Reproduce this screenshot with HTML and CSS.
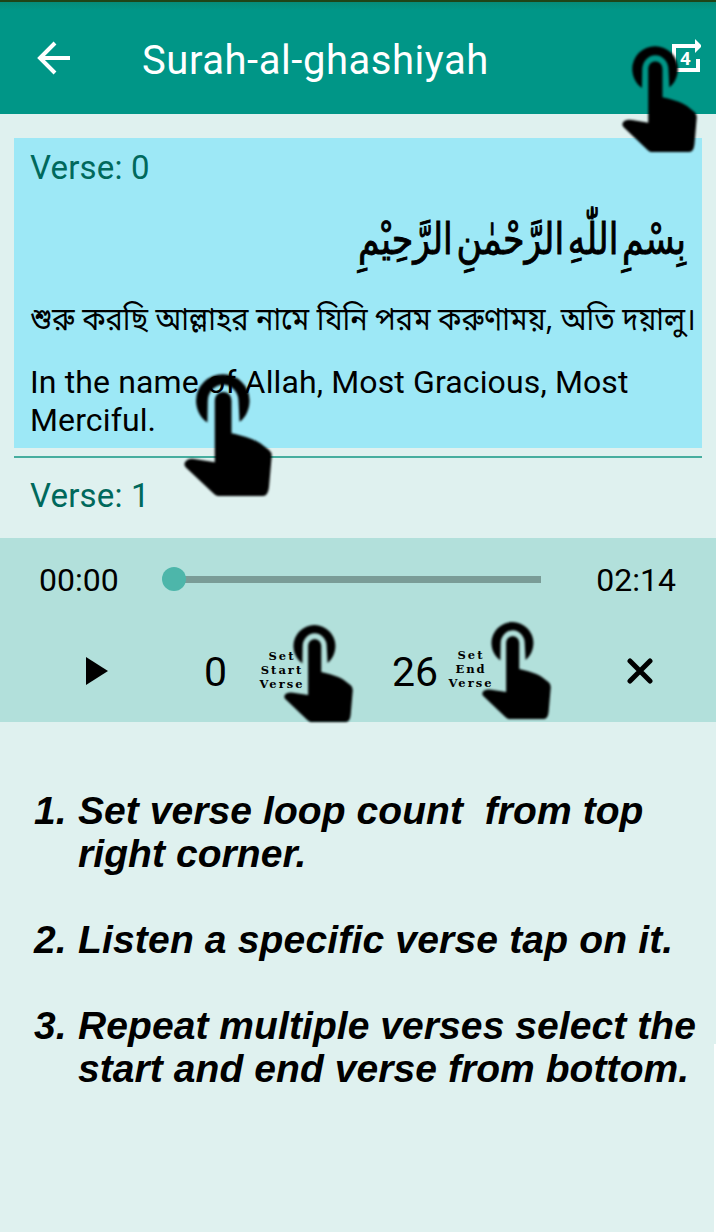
FILE: index.html
```html
<!DOCTYPE html>
<html lang="en">
<head>
<meta charset="utf-8">
<title>Surah-al-ghashiyah</title>
<link rel="stylesheet" href="styles.css">
</head>
<body>
<svg class="defs" width="0" height="0">
  <symbol id="tap" viewBox="0 0 263 368" preserveAspectRatio="none">
    <path d="M70 148C49 135 36 108 36 82A80 78 0 0 1 196 82C196 108 184 134 166 146L163 85A46 50 0 0 0 71 85Z"/>
    <path d="M92 267V84C92 48 142 48 142 84V180C172 187 205 195 228 210L254 230Q263 237 262 250L254 342Q251 368 236 368H101Q94 367 86 358L5 282Q-3 272 6 263Q15 254 35 258Z"/>
  </symbol>
</svg>
<main class="screen">
  <header class="toolbar">
    <svg class="back" viewBox="0 0 34 34"><path d="M33 17H3M18 2L3 17L18 32"/></svg>
    <h1 class="title">Surah-al-ghashiyah</h1>
    <div class="loop">
      <svg viewBox="0 0 32 36" width="32" height="36"><path d="M3 22V9H24M27 22V33H3V22" fill="none" stroke="#fff" stroke-width="4"/><path d="M24 2L30 8V10L24 16Z" fill="#fff"/></svg>
      <span class="count">4</span>
      <svg class="hand hand-loop"><use href="#tap"/></svg>
    </div>
  </header>
  <section class="verses">
    <article class="verse active">
      <h2 class="label">Verse: 0</h2>
      <svg class="arabic" width="688" height="100"><text x="344" y="67" textLength="328" lengthAdjust="spacingAndGlyphs">بِسْمِ اللّٰهِ الرَّحْمٰنِ الرَّحِيْمِ</text></svg>
      <svg class="bengali" width="688" height="60"><text x="16" y="44" textLength="666" lengthAdjust="spacingAndGlyphs">শুরু করছি আল্লাহর নামে যিনি পরম করুণাময়, অতি দয়ালু।</text></svg>
      <p class="english">In the name of Allah, Most Gracious, Most<br>Merciful.</p>
      <svg class="hand hand-verse"><use href="#tap"/></svg>
    </article>
    <article class="verse next"><h2 class="label">Verse: 1</h2></article>
  </section>
  <section class="player">
    <div class="timeline">
      <span class="time">00:00</span>
      <div class="track"><i class="knob"></i></div>
      <span class="time">02:14</span>
    </div>
    <div class="controls">
      <svg class="play" viewBox="0 0 22 28"><path d="M0 0L22 14L0 28Z"/></svg>
      <span class="num start">0</span>
      <div class="set set-start">Set<br>Start<br>Verse<svg class="hand hand-start"><use href="#tap"/></svg></div>
      <span class="num end">26</span>
      <div class="set set-end">Set<br>End<br>Verse<svg class="hand hand-end"><use href="#tap"/></svg></div>
      <svg class="close" viewBox="0 0 26 26"><path d="M3 3L23 23M23 3L3 23"/></svg>
    </div>
  </section>
  <section class="help">
    <ol class="steps">
      <li><b>1.</b><p>Set verse loop count&nbsp; from top<br>right corner.</p></li>
      <li><b>2.</b><p class="spread">Listen a specific verse tap on it.</p></li>
      <li><b>3.</b><p>Repeat multiple verses select the<br>start and end verse from bottom.</p></li>
    </ol>
    <i class="edge"></i>
  </section>
</main>
</body>
</html>
```
FILE: styles.css
```css
* { box-sizing: border-box; margin: 0; padding: 0; }
body { width: 716px; height: 1232px; overflow: hidden; background: #dff1ef; color: #000; font-family: Roboto, sans-serif; }
.defs { display: block; height: 0; }
svg { display: block; flex: none; }
.screen { display: flex; flex-direction: column; height: 1232px; }
.toolbar { flex: none; display: flex; align-items: flex-start; height: 114px; border-top: 2px solid #204417; background: linear-gradient(#068b78, #009687 8px); color: #fff; padding-left: 37px; }
.back { width: 34px; height: 34px; margin-top: 39px; fill: none; stroke: #fff; stroke-width: 4; }
.title { font-size: 40px; font-weight: 400; line-height: 48px; margin: 35px 0 0 71px; width: 528px; letter-spacing: .55px; }
.loop { position: relative; width: 32px; height: 36px; margin: 35px 0 0 1px; }
.count { position: absolute; left: 0; top: 11px; width: 29px; text-align: center; font: bold 18px/20px "Open Sans", sans-serif; }
.hand { position: absolute; z-index: 2; filter: blur(.9px); overflow: visible; }
.hand-loop { left: -49px; top: 8px; width: 75px; height: 107px; }
.verses { flex: none; height: 424px; padding: 24px 14px 0; }
.verse { position: relative; }
.active { height: 310px; background: #9de8f6; }
.label { font-size: 33px; font-weight: 400; line-height: 38px; padding: 11px 16px 0; color: #00695c; letter-spacing: .2px; }
.arabic { height: 99px; overflow: visible; }
.arabic text { font: 43px "DejaVu Sans", sans-serif; word-spacing: -9px; stroke: #000; stroke-width: .9; direction: ltr; }
.bengali { height: 60px; overflow: visible; }
.bengali text { font: 32px "Noto Sans Bengali", "Noto Sans", sans-serif; }
.english { font-size: 32px; line-height: 38px; padding: 17px 0 0 16px; white-space: nowrap; letter-spacing: .13px; }
.hand-verse { left: 170px; top: 235px; width: 88px; height: 123px; }
.next { margin-top: 8px; border-top: 2px solid #46ae9f; height: 82px; }
.next .label { padding-top: 19px; }
.player { flex: none; height: 184px; background: #b2e0db; }
.timeline { display: flex; align-items: center; justify-content: space-between; height: 82px; padding: 2px 40px 0 39px; }
.time { font-size: 32px; line-height: 38px; }
.track { position: relative; width: 367px; height: 7px; background: #7a9c97; margin: -2px 1px 0 0; }
.knob { position: absolute; left: -12px; top: -9px; width: 24px; height: 24px; border-radius: 50%; background: #4db6aa; }
.controls { display: flex; align-items: flex-start; height: 102px; padding-left: 86px; }
.play { width: 22px; height: 28px; margin-top: 37px; }
.num { font-size: 41px; line-height: 48px; margin-top: 28px; }
.start { width: 55px; margin-left: 96px; }
.set { position: relative; font: bold 11.5px/14px "DejaVu Serif", serif; text-align: center; letter-spacing: 2px; width: 48px; margin: 29px 0 0 -1px; white-space: nowrap; }
.end { width: 55px; margin-left: 86px; }
.set-end { margin: 28px 0 0; }
.hand-start { left: 26px; top: -25px; width: 69px; height: 98px; }
.hand-end { left: 35px; top: -27px; width: 69px; height: 98px; }
.close { width: 26px; height: 26px; margin: 38px 0 0 132px; fill: none; stroke: #000; stroke-width: 5; stroke-linecap: round; }
.help { display: flex; justify-content: space-between; height: 510px; }
.steps { list-style: none; display: flex; flex-direction: column; gap: 43px; padding: 67px 0 0 34px; font: italic bold 39px/43px "Liberation Sans", sans-serif; white-space: nowrap; letter-spacing: .07px; }
.steps li { display: flex; }
.steps b { width: 44px; }
.spread { letter-spacing: .17px; }
.edge { width: 2px; height: 188px; margin: 322px 0 0 -10px; background: #fff; flex: none; }
```
